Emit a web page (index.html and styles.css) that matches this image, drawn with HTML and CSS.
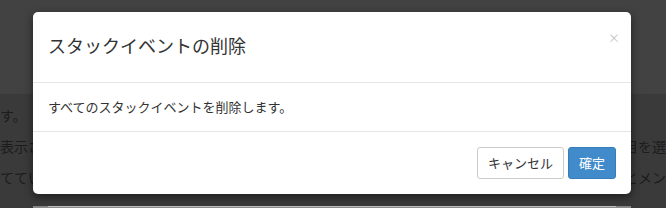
FILE: index.html
```html
<!DOCTYPE html>
<html lang="ja">
<head>
    <meta charset="UTF-8">
    <meta name="viewport" content="width=device-width, initial-scale=1.0">
    <title>スタックイベントの削除</title>
    <link rel="stylesheet" href="styles.css">
</head>
<body>

    <!-- Page behind the backdrop -->
    <div class="page">
        <div class="page-top"></div>
        <div class="page-body">
            <div class="page-line"><span>す。</span><span></span></div>
            <div class="page-line"><span>表示さ</span><span>目を選</span></div>
            <div class="page-line"><span>ててい</span><span>とメン</span></div>
        </div>
    </div>

    <!-- Delete dialog -->
    <div class="dialog">
        <div class="modal-content">
            <div class="modal-header">
                <h4 class="modal-title">スタックイベントの削除</h4>
                <span class="close">×</span>
            </div>
            <div class="modal-body">
                すべてのスタックイベントを削除します。
            </div>
            <div class="modal-footer">
                <button type="button" class="btn btn-default">キャンセル</button>
                <button type="button" class="btn btn-primary">確定</button>
            </div>
        </div>
        <div class="under"><div class="under-line"></div></div>
    </div>

</body>
</html>
```

FILE: styles.css
```css
/* General Styles */
body {
    font-family: "Noto Sans CJK JP", "Noto Sans", sans-serif;
    background-color: #3a3a3a;
    margin: 0;
    padding: 0;
    width: 666px;
    height: 208px;
    overflow: hidden;
    position: relative;
}

/* Page behind the backdrop */
.page-top {
    height: 94px;
    background-color: #424242;
}

.page-body {
    padding-top: 6px;
}

.page-line {
    display: flex;
    justify-content: space-between;
    height: 31px;
    line-height: 31px;
    font-size: 14px;
    color: #1c1c1c;
}

.page-line span:last-child {
    width: 42px;
    white-space: nowrap;
}

/* Dialog */
.dialog {
    position: absolute;
    top: 12px;
    left: 33px;
    width: 598px;
}

.modal-content {
    background-color: #fff;
    border-radius: 5px;
    box-shadow: 0 3px 9px rgba(0, 0, 0, 0.5);
    color: #333;
}

.modal-header {
    display: flex;
    justify-content: space-between;
    padding: 16px 15px 0 15px;
    height: 54px;
    border-bottom: 1px solid #e5e5e5;
}

.modal-title {
    margin: 0;
    font-size: 18px;
    font-weight: 400;
    line-height: 34px;
}

.close {
    font-size: 12px;
    color: #c4c4c4;
    line-height: 20px;
    margin-right: -4px;
}

.modal-body {
    padding: 15px;
    height: 18px;
    font-size: 13px;
    line-height: 18px;
}

.modal-footer {
    display: flex;
    justify-content: flex-end;
    gap: 4px;
    padding: 15px;
    border-top: 1px solid #e5e5e5;
}

.btn {
    font-family: inherit;
    font-size: 13px;
    line-height: 18px;
    padding: 6px 10px;
    border: 1px solid transparent;
    border-radius: 3px;
    cursor: pointer;
}

.btn-default {
    background-color: #fff;
    border-color: #ccc;
    color: #333;
}

.btn-primary {
    background-color: #428bca;
    border-color: #357ebd;
    color: #fff;
}

/* Lighter strip under the dialog */
.under {
    height: 14px;
    background: linear-gradient(#7e7e7e, #d6d6d6 70%, #e4e4e4);
}

.under-line {
    margin: 12px 15px 0 15px;
    height: 1px;
    background-color: #bdbdbd;
}
```
